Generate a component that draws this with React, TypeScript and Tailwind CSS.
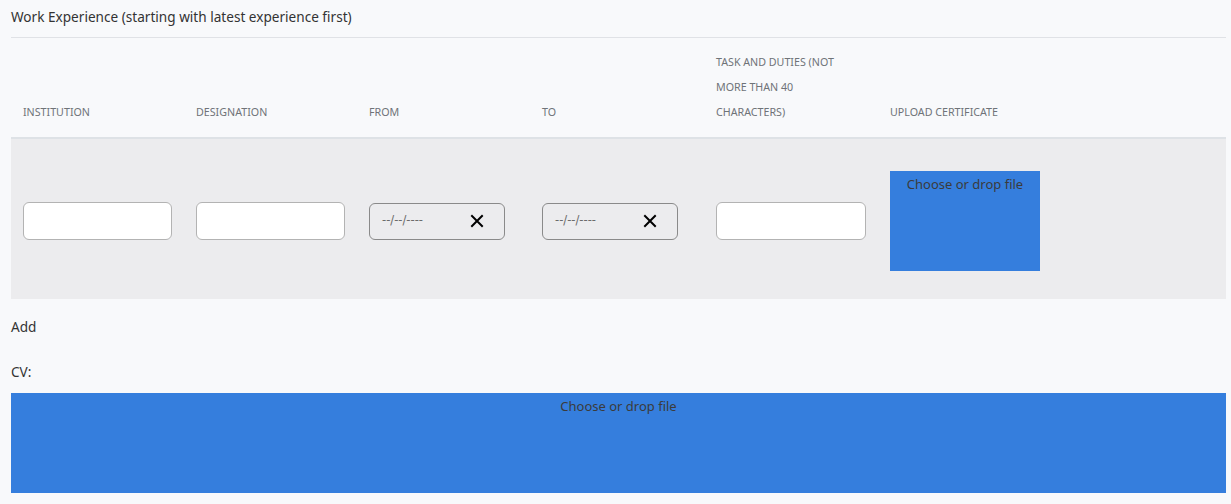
const headers = ["Institution", "Designation", "From", "To"];

const XIcon = () => (
    <svg width="14" height="14" viewBox="0 0 14 14" className="text-black">
        <path d="M2 2 L12 12 M12 2 L2 12" stroke="currentColor" strokeWidth="2" strokeLinecap="square" />
    </svg>
);

const TextBox = () => (
    <div className="w-[149px] h-[38px] rounded-[6px] border border-[#b3b3b3] bg-white"></div>
);

const DateBox = () => (
    <div className="w-[136px] h-[37px] rounded-[6px] border border-[#8a8a8a] flex items-center pl-[12px] pr-[20px] justify-between">
        <span className="text-[11.5px] text-[#6b6b6b]" style={{ fontFamily: '"DejaVu Sans", sans-serif' }}>
            --/--/----
        </span>
        <XIcon />
    </div>
);

const DropZone = ({ className }: { className: string }) => (
    <div className={`bg-[#357edd] text-center text-[13px] leading-[20px] pt-[3px] text-[#3b3b3b] ${className}`}>
        Choose or drop file
    </div>
);

const App = () => {
    return (
        <div
            className="min-h-[504px] bg-[#f8f9fb] pl-[11px] pr-[5px] text-[#333]"
            style={{ fontFamily: '"Noto Sans", sans-serif' }}
        >
            <div className="text-[13.6px] leading-[33px] h-[38px] border-b border-[#e0e2e6]">
                Work Experience (starting with latest experience first)
            </div>

            {/* header row */}
            <div className="grid grid-cols-[173px_173px_173px_174px_174px_1fr] border-b-2 border-[#dee2e6] text-[10.7px] leading-[25px] uppercase text-[#6f7378]">
                {headers.map((h) => (
                    <div key={h} className="p-[12px] flex items-end">
                        {h}
                    </div>
                ))}
                <div className="p-[12px] flex items-end">
                    <div>
                        Task and duties (not
                        <br />
                        more than 40
                        <br />
                        characters)
                    </div>
                </div>
                <div className="p-[12px] flex items-end">Upload certificate</div>
            </div>

            {/* body row */}
            <div className="grid grid-cols-[173px_173px_173px_174px_174px_1fr] h-[160px] pt-[4px] bg-[#ececee] items-center">
                <div className="pl-[12px]">
                    <TextBox />
                </div>
                <div className="pl-[12px]">
                    <TextBox />
                </div>
                <div className="pl-[12px]">
                    <DateBox />
                </div>
                <div className="pl-[12px]">
                    <DateBox />
                </div>
                <div className="pl-[12px]">
                    <div className="w-[150px] h-[38px] rounded-[6px] border border-[#b3b3b3] bg-white"></div>
                </div>
                <div className="pl-[12px]">
                    <DropZone className="w-[150px] h-[100px]" />
                </div>
            </div>

            <div className="text-[13.6px] leading-[20px] mt-[18px]">Add</div>
            <div className="text-[13.6px] leading-[20px] mt-[25px]">CV:</div>
            <DropZone className="mt-[11px] h-[100px]" />
        </div>
    );
};

export default App;
